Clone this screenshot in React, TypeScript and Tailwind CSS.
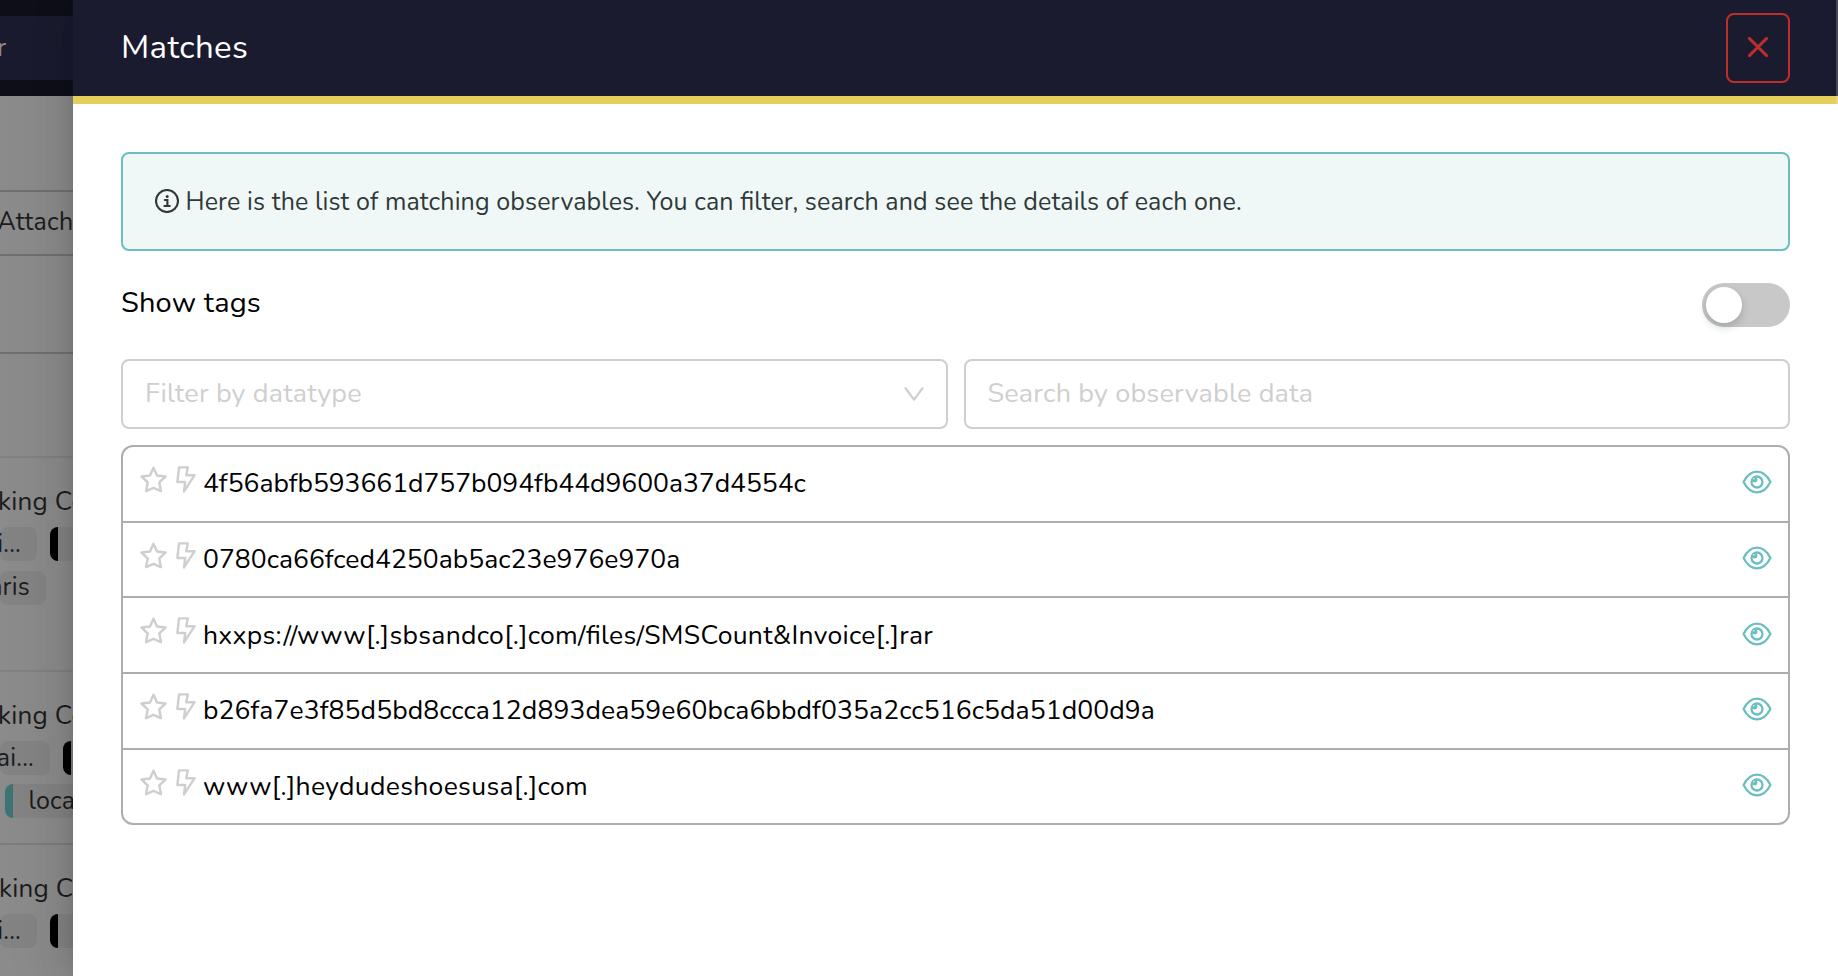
import type { ReactNode } from "react";

const observables = [
  { value: "4f56abfb593661d757b094fb44d9600a37d4554c", tracking: "tracking-[-0.035px]" },
  { value: "0780ca66fced4250ab5ac23e976e970a", tracking: "tracking-[0.03px]" },
  { value: "hxxps://www[.]sbsandco[.]com/files/SMSCount&Invoice[.]rar", tracking: "tracking-[0.3px]" },
  { value: "b26fa7e3f85d5bd8ccca12d893dea59e60bca6bbdf035a2cc516c5da51d00d9a", tracking: "tracking-[0.1px]" },
  { value: "www[.]heydudeshoesusa[.]com", tracking: "tracking-[0.33px]" },
];

function InfoIcon() {
  return (
    <svg className="-mt-0.5 h-6 w-6 shrink-0" viewBox="0 0 24 24" fill="none" stroke="currentColor" strokeWidth="2.1">
      <circle cx="12" cy="12" r="11" />
      <circle cx="12.2" cy="7.6" r="1.5" fill="currentColor" stroke="none" />
      <path d="M9.8 11h2.6v5.8M9.4 17h5.4" strokeLinecap="round" />
    </svg>
  );
}

function CloseIcon() {
  return (
    <svg className="-mt-0.5 h-5 w-5" viewBox="0 0 20 20" fill="none" stroke="currentColor" strokeWidth="2.9" strokeLinecap="round">
      <path d="M1.4 1.4l17.2 17.2M18.6 1.4L1.4 18.6" />
    </svg>
  );
}

function ChevronIcon() {
  return (
    <svg className="h-[14px] w-5" viewBox="0 0 20 14" fill="none" stroke="currentColor" strokeWidth="2.3">
      <path d="M1 .6l9 12 9-12" strokeLinejoin="round" />
    </svg>
  );
}

function StarIcon() {
  return (
    <svg className="h-[27px] w-[27px]" viewBox="0 0 27 27" fill="none" stroke="currentColor" strokeWidth="2.5" strokeLinejoin="round">
      <path d="M13.5 1.8l3.5 7.6 8.5 1.1-6.2 5.8 1.6 8.8-7.4-3.2-7.4 3.2 1.6-8.8-6.2-5.8 8.5-1.1z" />
    </svg>
  );
}

function BoltIcon() {
  return (
    <svg className="h-[27px] w-5" viewBox="0 0 20 27" fill="none" stroke="currentColor" strokeWidth="2.4" strokeLinejoin="round">
      <path d="M3 1.4h8.8L10.2 9.2H18.6L8 25.4 9.2 16H1.4z" />
    </svg>
  );
}

function EyeIcon() {
  return (
    <svg className="h-6 w-[30px]" viewBox="0 0 30 24" fill="none" stroke="currentColor" strokeWidth="2.3">
      <path d="M1.6 12C5 5.2 9.6 1.7 15 1.7S25 5.2 28.4 12C25 18.8 20.4 22.3 15 22.3S5 18.8 1.6 12z" strokeLinejoin="round" />
      <circle cx="15" cy="12" r="5.5" />
      <circle cx="12.7" cy="9.7" r="2.7" fill="currentColor" stroke="none" />
      <circle cx="11.8" cy="8.7" r=".7" fill="#fff" stroke="none" />
    </svg>
  );
}

function Tag({ className, children }: { className: string; children?: ReactNode }) {
  return (
    <span className={`flex shrink-0 items-center justify-end rounded-lg bg-[#848484] text-[25px] leading-none ${className}`}>
      {children}
    </span>
  );
}

function Backdrop() {
  return (
    <div className="flex h-full w-[73px] shrink-0 flex-col overflow-hidden whitespace-nowrap bg-[#8c8c8c] tracking-[0.2px] text-[#1c1c1c]">
      <div className="h-24 shrink-0 bg-[#0f0f1a] py-4">
        <div className="flex h-16 items-center bg-[#1b1b30] pb-0.5 text-[26px] text-[#8c8c8c]">
          <span className="-ml-[3px]">r</span>
        </div>
      </div>
      <div className="h-[94px] shrink-0" />
      <div className="flex h-[66px] shrink-0 items-center border-y-2 border-[#707070] text-[25px]">
        <span className="-ml-[2.5px] tracking-[0.3px]">Attach</span>
      </div>
      <div className="h-[98px] shrink-0 border-b-2 border-[#707070]" />
      <div className="h-[104px] shrink-0 border-b-2 border-[#828282]" />
      <div className="h-[214px] shrink-0 border-b-2 border-[#828282] pt-[26px]">
        <div className="-ml-[2px] flex h-[35px] items-center text-[26px] leading-none">king Co</div>
        <div className="mt-2 flex h-[34px] gap-[13px]">
          <Tag className="w-[37px] pr-4">i...</Tag>
          <Tag className="w-24 border-l-8 border-black" />
        </div>
        <div className="mt-[10px] flex h-[34px]">
          <Tag className="w-[46px] pr-4 pb-0.5">aris</Tag>
        </div>
      </div>
      <div className="h-[173px] shrink-0 border-b-2 border-[#7d7d7d] pt-[26px]">
        <div className="-ml-[2px] flex h-[35px] items-center text-[26px] leading-none">king Co</div>
        <div className="mt-2 flex h-[34px] gap-[13px]">
          <Tag className="w-[50px] pr-4">ai...</Tag>
          <Tag className="w-24 border-l-8 border-black" />
        </div>
        <div className="mt-[9px] flex h-[34px] pl-[5px]">
          <span className="flex w-28 shrink-0 items-center rounded-lg border-l-8 border-[#3f7476] bg-[#848484] pl-[15.5px] text-[25px] leading-none">
            loca
          </span>
        </div>
      </div>
      <div className="h-[131px] shrink-0 pt-[26px]">
        <div className="-ml-px flex h-[35px] items-center text-[26px] leading-none">king Co</div>
        <div className="mt-2 flex h-[34px] gap-[13px]">
          <Tag className="w-[37px] pr-4">i...</Tag>
          <Tag className="w-24 border-l-8 border-black" />
        </div>
      </div>
    </div>
  );
}

export default function App() {
  return (
    <div className="flex h-[976px] w-full overflow-hidden font-[Nunito,Lato,sans-serif] [font-feature-settings:'liga'_1]">
      <Backdrop />
      <section className="relative flex min-w-0 flex-1 flex-col bg-white text-black shadow-[-12px_0_32px_rgba(0,0,0,0.08),-6px_0_12px_-8px_rgba(0,0,0,0.12),-18px_0_56px_16px_rgba(0,0,0,0.05)]">
        <header className="flex h-[104px] items-center justify-between border-b-8 border-[#e4cf5d] bg-[#1b1b30] pr-12 pl-12">
          <h1 className="-mt-0.5 text-[33px] leading-none tracking-[0.4px] text-white">Matches</h1>
          <button className="flex h-[70px] w-16 items-center justify-center rounded-lg border-2 border-[#be2d2e] text-[#be2d2e]">
            <CloseIcon />
          </button>
        </header>
        <div className="absolute top-0 right-0 h-[104px] w-0.5 bg-white/20" />

        <main className="flex flex-col px-12 pt-12">
          <div className="flex h-[99px] items-center gap-[6.5px] rounded-lg border-2 border-[#6dbec1] bg-[#eff8f7] pl-8 text-[#2f3939]">
            <InfoIcon />
            <p className="mt-px text-[25px] leading-none tracking-[0.13px]">
              Here is the list of matching observables. You can filter, search and see the details of each one.
            </p>
          </div>

          <div className="mt-8 flex h-11 items-center justify-between">
            <span className="-mt-[5px] text-[29px] leading-none tracking-[0.15px]">Show tags</span>
            <button className="flex h-11 w-[88px] items-center rounded-full bg-[#c8c8c8] pl-1">
              <span className="h-9 w-9 rounded-full bg-white shadow-[0_4px_8px_rgba(0,35,11,0.2)]" />
            </button>
          </div>

          <div className="mt-8 flex gap-4 text-[27px] leading-none text-[#cfcfcf]">
            <div className="flex h-[70px] w-[827px] items-center justify-between rounded-lg border-2 border-[#cfcfcf] pr-[22px] pl-[22px]">
              <span className="-mt-px tracking-[0.18px]">Filter by datatype</span>
              <ChevronIcon />
            </div>
            <div className="flex h-[70px] flex-1 items-center rounded-lg border-2 border-[#cfcfcf] pl-[21.5px]">
              <span className="-mt-px tracking-[0.18px]">Search by observable data</span>
            </div>
          </div>

          <ul className="mt-4 h-[380px] rounded-xl border-2 border-[#adadad] [&>li:last-child]:h-[73.7px] [&>li:last-child]:border-b-0">
            {observables.map((o) => (
              <li key={o.value} className="flex h-[75.7px] items-center border-b-2 border-[#adadad] pr-4 pl-[17px]">
                <span className="-mt-[9px] flex gap-[9px] text-[#cfcfcf]">
                  <StarIcon />
                  <BoltIcon />
                </span>
                <span className={`-mt-[0.5px] ml-[7px] text-[26.5px] leading-none ${o.tracking}`}>{o.value}</span>
                <span className="-mt-[3px] ml-auto text-[#6dbec1]">
                  <EyeIcon />
                </span>
              </li>
            ))}
          </ul>
        </main>
      </section>
    </div>
  );
}
